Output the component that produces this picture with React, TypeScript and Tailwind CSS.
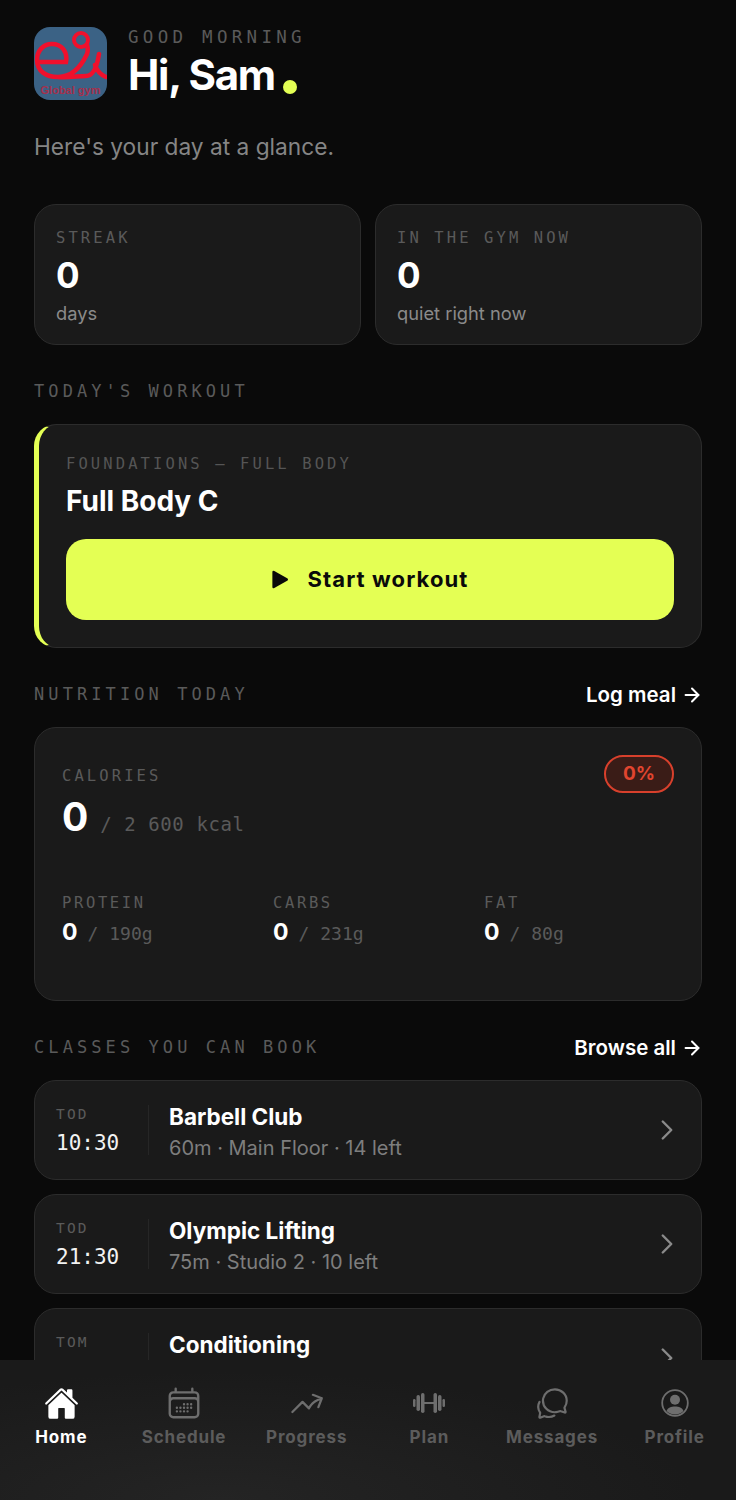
import { ArrowRight, ChevronRight } from "lucide-react";
import { HiOutlineArrowTrendingUp, HiOutlineCalendarDays } from "react-icons/hi2";
import { IoChatbubblesOutline, IoHome } from "react-icons/io5";

const mono = "font-['DejaVu_Sans_Mono',monospace]";
const head = "font-['Inter',sans-serif]";

function Logo() {
  return (
    <svg viewBox="0 0 73 73" className="h-[73px] w-[73px] shrink-0">
      <rect width="73" height="73" rx="16" fill="#3b6285" />
      <path
        d="M5 35 H32 C34 24 27 17 18 17 C9 17 3 24 3 33 C3 44 12 50 24 50 C36 50 46 42 53 27 C54 24 54 21 53 18 M24 50 C34 51 44 49 52 49 C59 49 63 40 65 27 M61 38 C63 44 67 48 72 50"
        fill="none"
        stroke="#f0102c"
        strokeWidth="4.5"
        strokeLinecap="round"
      />
      <circle cx="47" cy="13" r="7" fill="none" stroke="#f0102c" strokeWidth="4" />
      <text x="36.5" y="67" textAnchor="middle" fontSize="11" fontWeight="700" fill="#a5304c" fontFamily="Liberation Sans">
        Global gym
      </text>
    </svg>
  );
}

function BarbellIcon({ className }: { className: string }) {
  return (
    <svg viewBox="0 0 32 20" className={`h-[20px] w-[32px] ${className}`} fill="currentColor">
      <rect x="0" y="6" width="2.5" height="8" rx="1.2" />
      <rect x="3.5" y="2" width="3.5" height="16" rx="1.7" />
      <rect x="8" y="0" width="3.5" height="20" rx="1.7" />
      <rect x="11" y="9" width="10" height="2" />
      <rect x="20.5" y="0" width="3.5" height="20" rx="1.7" />
      <rect x="25" y="2" width="3.5" height="16" rx="1.7" />
      <rect x="29.5" y="6" width="2.5" height="8" rx="1.2" />
    </svg>
  );
}

function ProfileIcon({ className }: { className: string }) {
  return (
    <svg viewBox="0 0 28 28" className={`h-[28px] w-[28px] ${className}`} fill="currentColor">
      <circle cx="14" cy="14" r="12.8" fill="none" stroke="currentColor" strokeWidth="1.8" />
      <circle cx="14" cy="10.8" r="5" />
      <path d="M5.5 22 C7 18.4 10 17.4 14 17.4 C18 17.4 21 18.4 22.5 22 C20.4 24.2 17.4 25.6 14 25.6 C10.6 25.6 7.6 24.2 5.5 22 Z" />
    </svg>
  );
}

function Label({ children, className = "" }: { children: React.ReactNode; className?: string }) {
  return <div className={`${mono} whitespace-nowrap ${className}`}>{children}</div>;
}

function SectionHead({ title, link }: { title: string; link?: string }) {
  return (
    <div className="flex h-6 items-center justify-between">
      <Label className="pb-[2px] text-[17px] leading-6 tracking-[0.24em] text-[#5a5a5a]">{title}</Label>
      {link && (
        <div className={`${head} flex items-center gap-[5px] text-[20.5px] font-semibold text-white`}>
          {link}
          <ArrowRight size={22} strokeWidth={2.2} className="-mr-[1px]" />
        </div>
      )}
    </div>
  );
}

function StatCard({ label, sub }: { label: string; sub: string }) {
  return (
    <div className="h-[141px] flex-1 rounded-[22px] border border-[#2c2c2c] bg-[#1a1a1a] px-[21px] pt-[23px]">
      <Label className="text-[15.5px] leading-5 tracking-[0.2em] text-[#5a5a5a]">{label}</Label>
      <div className={`${head} mt-[5px] text-[35px] font-bold leading-[44px] text-white`}>0</div>
      <div className={`${head} mt-[4px] text-[18.3px] leading-6 text-[#8a8a8a]`}>{sub}</div>
    </div>
  );
}

function Macro({ label, goal }: { label: string; goal: string }) {
  return (
    <div className="w-[211px] shrink-0">
      <Label className="text-[15.5px] leading-5 tracking-[0.17em] text-[#5a5a5a]">{label}</Label>
      <div className="mt-[5px] flex items-baseline gap-[10px] leading-7">
        <span className={`${head} text-[23px] font-bold text-white`}>0</span>
        <span className={`${mono} text-[18px] text-[#5a5a5a]`}>/ {goal}</span>
      </div>
    </div>
  );
}

type ClassItem = { day: string; time?: string; name: string; info?: string };

const classes: ClassItem[] = [
  { day: "TOD", time: "10:30", name: "Barbell Club", info: "60m · Main Floor · 14 left" },
  { day: "TOD", time: "21:30", name: "Olympic Lifting", info: "75m · Studio 2 · 10 left" },
  // Third row sits mostly under the tab bar, only its top shows.
  { day: "TOM", name: "Conditioning" },
];

function ClassRow({ item }: { item: ClassItem }) {
  return (
    <div className="flex h-[100px] shrink-0 items-center rounded-[22px] border border-[#2c2c2c] bg-[#1a1a1a] pl-[21px] pr-[17px]">
      <div className="w-[92px] shrink-0">
        <Label className="text-[14.5px] leading-5 tracking-[0.15em] text-[#5a5a5a]">{item.day}</Label>
        <Label className="mt-[5px] h-7 text-[21px] leading-7 text-[#f2f2f2]">{item.time}</Label>
      </div>
      <div className="h-[50px] w-px shrink-0 bg-[#262626]" />
      <div className="ml-[20px] flex-1 pt-[4px]">
        <div className={`${head} text-[22.5px] font-bold leading-7 text-white`}>{item.name}</div>
        <div className={`${head} mt-[3px] h-7 text-[20px] leading-7 text-[#7e7e7e]`}>{item.info}</div>
      </div>
      <ChevronRight size={34} strokeWidth={1.7} className="text-[#8a8a8a]" />
    </div>
  );
}

const off = "text-[#6e6e6e]";

const tabs = [
  { label: "Home", icon: <IoHome size={35} className="text-white" />, active: true },
  { label: "Schedule", icon: <HiOutlineCalendarDays size={38} className={off} /> },
  { label: "Progress", icon: <HiOutlineArrowTrendingUp size={36} className={off} /> },
  { label: "Plan", icon: <BarbellIcon className={off} /> },
  { label: "Messages", icon: <IoChatbubblesOutline size={35} className={off} /> },
  { label: "Profile", icon: <ProfileIcon className={off} /> },
];

export default function App() {
  return (
    <div className="flex h-[1500px] w-[736px] flex-col overflow-hidden bg-[#0a0a0a]">
      <main className="min-h-0 flex-1 overflow-hidden px-[34px] pt-[27px]">
        <div className="flex gap-[21px]">
          <Logo />
          <div>
            <Label className="text-[17.5px] leading-[20px] tracking-[0.245em] text-[#5a5a5a]">GOOD MORNING</Label>
            <div className="mt-[3px] flex items-end gap-[8px]">
              <div className={`${head} text-[42px] font-bold leading-[50px] tracking-[-0.03em] text-white`}>Hi, Sam</div>
              <div className="mb-[6px] h-[14px] w-[14px] rounded-full bg-[#e4ff54]" />
            </div>
          </div>
        </div>
        <p className={`${head} mt-[31px] text-[22.7px] leading-8 text-[#858585]`}>Here's your day at a glance.</p>

        <div className="mt-[41px] flex gap-[14px]">
          <StatCard label="STREAK" sub="days" />
          <StatCard label="IN THE GYM NOW" sub="quiet right now" />
        </div>

        <div className="mt-[35px]">
          <SectionHead title="TODAY'S WORKOUT" />
        </div>
        <div className="mt-[20px] h-[224px] rounded-[22px] border border-[#2c2c2c] border-l-[5px] border-l-[#e4ff54] bg-[#1a1a1a] px-[27px] pt-[29px]">
          <Label className="text-[15.5px] leading-5 tracking-[0.2em] text-[#555555]">FOUNDATIONS — FULL BODY</Label>
          <div className={`${head} mt-[9px] text-[28px] font-bold leading-9 text-white`}>Full Body C</div>
          <button className="mt-[20px] flex h-[81px] w-full items-center justify-center gap-[18px] rounded-[20px] bg-[#e4ff54]">
            <svg viewBox="0 0 18 20" className="h-[19px] w-[18px]">
              <path d="M1 2 Q1 0 3 1 L17 9 Q18 10 17 11 L3 19 Q1 20 1 18 Z" fill="#0a0a0a" />
            </svg>
            <span className={`${head} text-[22px] font-bold tracking-[0.05em] text-[#0a0a0a]`}>Start workout</span>
          </button>
        </div>

        <div className="mt-[35px]">
          <SectionHead title="NUTRITION TODAY" link="Log meal" />
        </div>
        <div className="mt-[20px] h-[274px] rounded-[22px] border border-[#2c2c2c] bg-[#1a1a1a] px-[27px] pt-[27px]">
          <div className="flex items-start justify-between">
            <div>
              <Label className="mt-[11px] text-[15.5px] leading-5 tracking-[0.2em] text-[#5a5a5a]">CALORIES</Label>
              <div className="mt-[7px] flex items-baseline gap-[12px]">
                <span className={`${head} text-[39px] font-bold leading-[48px] text-white`}>0</span>
                <span className={`${mono} text-[19px] tracking-[0.03em] text-[#5a5a5a]`}>/ 2 600 kcal</span>
              </div>
            </div>
            <div className={`${head} flex h-[38px] w-[70px] items-center justify-center rounded-full border-2 border-[#d8402c] bg-[#3a1c17] text-[19px] font-bold text-[#e0452f]`}>
              0%
            </div>
          </div>
          <div className="mt-[52px] flex">
            <Macro label="PROTEIN" goal="190g" />
            <Macro label="CARBS" goal="231g" />
            <Macro label="FAT" goal="80g" />
          </div>
        </div>

        <div className="mt-[35px]">
          <SectionHead title="CLASSES YOU CAN BOOK" link="Browse all" />
        </div>
        <div className="mt-[20px] flex flex-col gap-[14px]">
          {classes.map((c) => (
            <ClassRow key={c.name} item={c} />
          ))}
        </div>
      </main>

      <nav className="flex h-[140px] shrink-0 bg-[radial-gradient(ellipse_at_30%_100%,#242424,#1a1a1a_65%)] pt-[24px]">
        {tabs.map(({ label, icon, active }) => (
          <div key={label} className="flex flex-1 flex-col items-center">
            <div className="flex h-[38px] items-center justify-center">{icon}</div>
            <div className={`${head} mt-[3px] text-[17px] font-bold leading-[24px] tracking-[0.05em] ${active ? "text-white" : "text-[#5c5c5c]"}`}>
              {label}
            </div>
          </div>
        ))}
      </nav>
    </div>
  );
}
